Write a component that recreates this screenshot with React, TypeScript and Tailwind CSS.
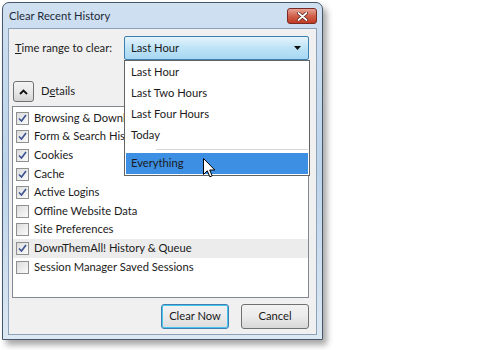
import React from "react";

const rows = [
  { label: "Browsing & Download History", checked: true },
  { label: "Form & Search History", checked: true },
  { label: "Cookies", checked: true },
  { label: "Cache", checked: true },
  { label: "Active Logins", checked: true },
  { label: "Offline Website Data", checked: false },
  { label: "Site Preferences", checked: false },
  { label: "DownThemAll! History & Queue", checked: true, hover: true },
  { label: "Session Manager Saved Sessions", checked: false },
];

const ranges = ["Last Hour", "Last Two Hours", "Last Four Hours", "Today"];

function CheckBox({ checked }: { checked: boolean }) {
  return (
    <span className="w-[13px] h-[13px] border border-[#8f8f8f] bg-gradient-to-br from-[#dcdcdc] to-[#fbfbfb] flex items-center justify-center shrink-0">
      {checked && (
        <svg width="9" height="9" viewBox="0 0 9 9">
          <path d="M1 4.5 L3.5 7 L8 1" fill="none" stroke="#3b5191" strokeWidth="1.6" />
        </svg>
      )}
    </span>
  );
}

function Cursor() {
  return (
    <svg width="13" height="21" viewBox="0 0 13 21" className="absolute left-[78px] top-[97px]">
      <path
        d="M0.5 0.5 L0.5 16.5 L4.3 12.8 L6.8 18.8 L9.2 17.8 L6.7 12 L11.8 12 Z"
        fill="#fff"
        stroke="#000"
        strokeWidth="1"
        strokeLinejoin="round"
      />
    </svg>
  );
}

export default function App() {
  return (
    <div className="w-[500px] h-[350px] bg-white relative overflow-hidden text-[#1b1b1b]" style={{ fontFamily: 'Lato, "Noto Sans", sans-serif' }}>
      <div className="absolute left-[2px] top-[2px] w-[321px] h-[338px] rounded-t-[7px] border border-[#46576a] bg-gradient-to-b from-[#cfe0f1] via-[#bcd3ea] to-[#dce8f3] shadow-[4px_5px_6px_rgba(0,0,0,0.35)] flex flex-col px-[5px] pb-[4px]">
        {/* title bar */}
        <div className="h-[25px] flex items-center justify-between shrink-0">
          <span className="text-[11.2px] pl-[1px] pt-[1px] text-[#1d2a3a]">Clear Recent History</span>
          <span className="w-[30px] h-[16px] mt-[1px] rounded-[3px] border border-[#7a2a22] bg-gradient-to-b from-[#e7a395] via-[#d0604b] to-[#c13a23] flex items-center justify-center">
            <svg width="11" height="9" viewBox="0 0 11 9">
              <path d="M1.5 1 L9.5 8 M9.5 1 L1.5 8" stroke="#4a1a14" strokeWidth="3.2" strokeLinecap="round" />
              <path d="M1.5 1 L9.5 8 M9.5 1 L1.5 8" stroke="#fff" strokeWidth="1.8" strokeLinecap="round" />
            </svg>
          </span>
        </div>

        {/* client */}
        <div className="flex-1 bg-[#f0f0f0] border border-[#8da2b8] relative pl-[3px] pr-[7px] text-[11.2px]">
          <div className="flex items-center mt-[7px] h-[24px]">
            <span className="pl-[3px] w-[112px]">
              <span className="underline">T</span>ime range to clear:
            </span>
            <div className="flex-1 h-[24px] rounded-[2px] border border-[#3c7fb1] bg-gradient-to-b from-[#e6f4fc] via-[#bde3f7] to-[#a7d7f2] flex items-center justify-between pl-[6px] pr-[7px]">
              <span>Last Hour</span>
              <svg width="7" height="4" viewBox="0 0 7 4">
                <path d="M0 0 L7 0 L3.5 4 Z" fill="#111" />
              </svg>
            </div>
          </div>

          <div className="flex items-center mt-[21px] h-[21px] pl-[1px]">
            <span className="w-[21px] h-[21px] rounded-[3px] border border-[#707070] bg-gradient-to-b from-[#f4f4f4] via-[#e8e8e8] to-[#d4d4d4] flex items-center justify-center">
              <svg width="9" height="6" viewBox="0 0 9 6">
                <path d="M1 5 L4.5 1.5 L8 5" fill="none" stroke="#111" strokeWidth="1.8" />
              </svg>
            </span>
            <span className="ml-[7px]">
              D<span className="underline">e</span>tails
            </span>
          </div>

          <div className="mt-[4px] h-[192px] border border-[#828790] bg-white pt-[2px] flex flex-col">
            {rows.map((r) => (
              <div
                key={r.label}
                className={`h-[18.6px] flex items-center gap-[5px] pl-[3px] ${r.hover ? "bg-[#ececec]" : ""}`}
              >
                <CheckBox checked={r.checked} />
                <span className="whitespace-nowrap">{r.label}</span>
              </div>
            ))}
          </div>

          <div className="flex justify-end gap-[12px] mt-[6px]">
            <button className="w-[68px] h-[25px] rounded-[3px] border border-[#3c7fb1] bg-gradient-to-b from-[#f2f2f2] via-[#ebebeb] to-[#dcdcdc] shadow-[inset_0_0_0_1px_#48c4f0]">
              Clear Now
            </button>
            <button className="w-[68px] h-[25px] rounded-[3px] border border-[#707070] bg-gradient-to-b from-[#f2f2f2] via-[#ebebeb] to-[#d8d8d8]">
              Cancel
            </button>
          </div>

          {/* open dropdown */}
          <div className="absolute left-[115px] top-[31px] w-[186px] h-[116px] border border-[#646464] bg-white flex flex-col pt-[1px] px-[1px]">
            {ranges.map((t) => (
              <div key={t} className="h-[21px] flex items-center pl-[5px]">
                {t}
              </div>
            ))}
            <div className="h-[7px] flex items-center pl-[30px]">
              <div className="h-[1px] w-full bg-[#d8d8d8]" />
            </div>
            <div className="h-[21px] flex items-center pl-[5px] bg-[#3d8fe4]">Everything</div>
            <Cursor />
          </div>
        </div>
      </div>
    </div>
  );
}
